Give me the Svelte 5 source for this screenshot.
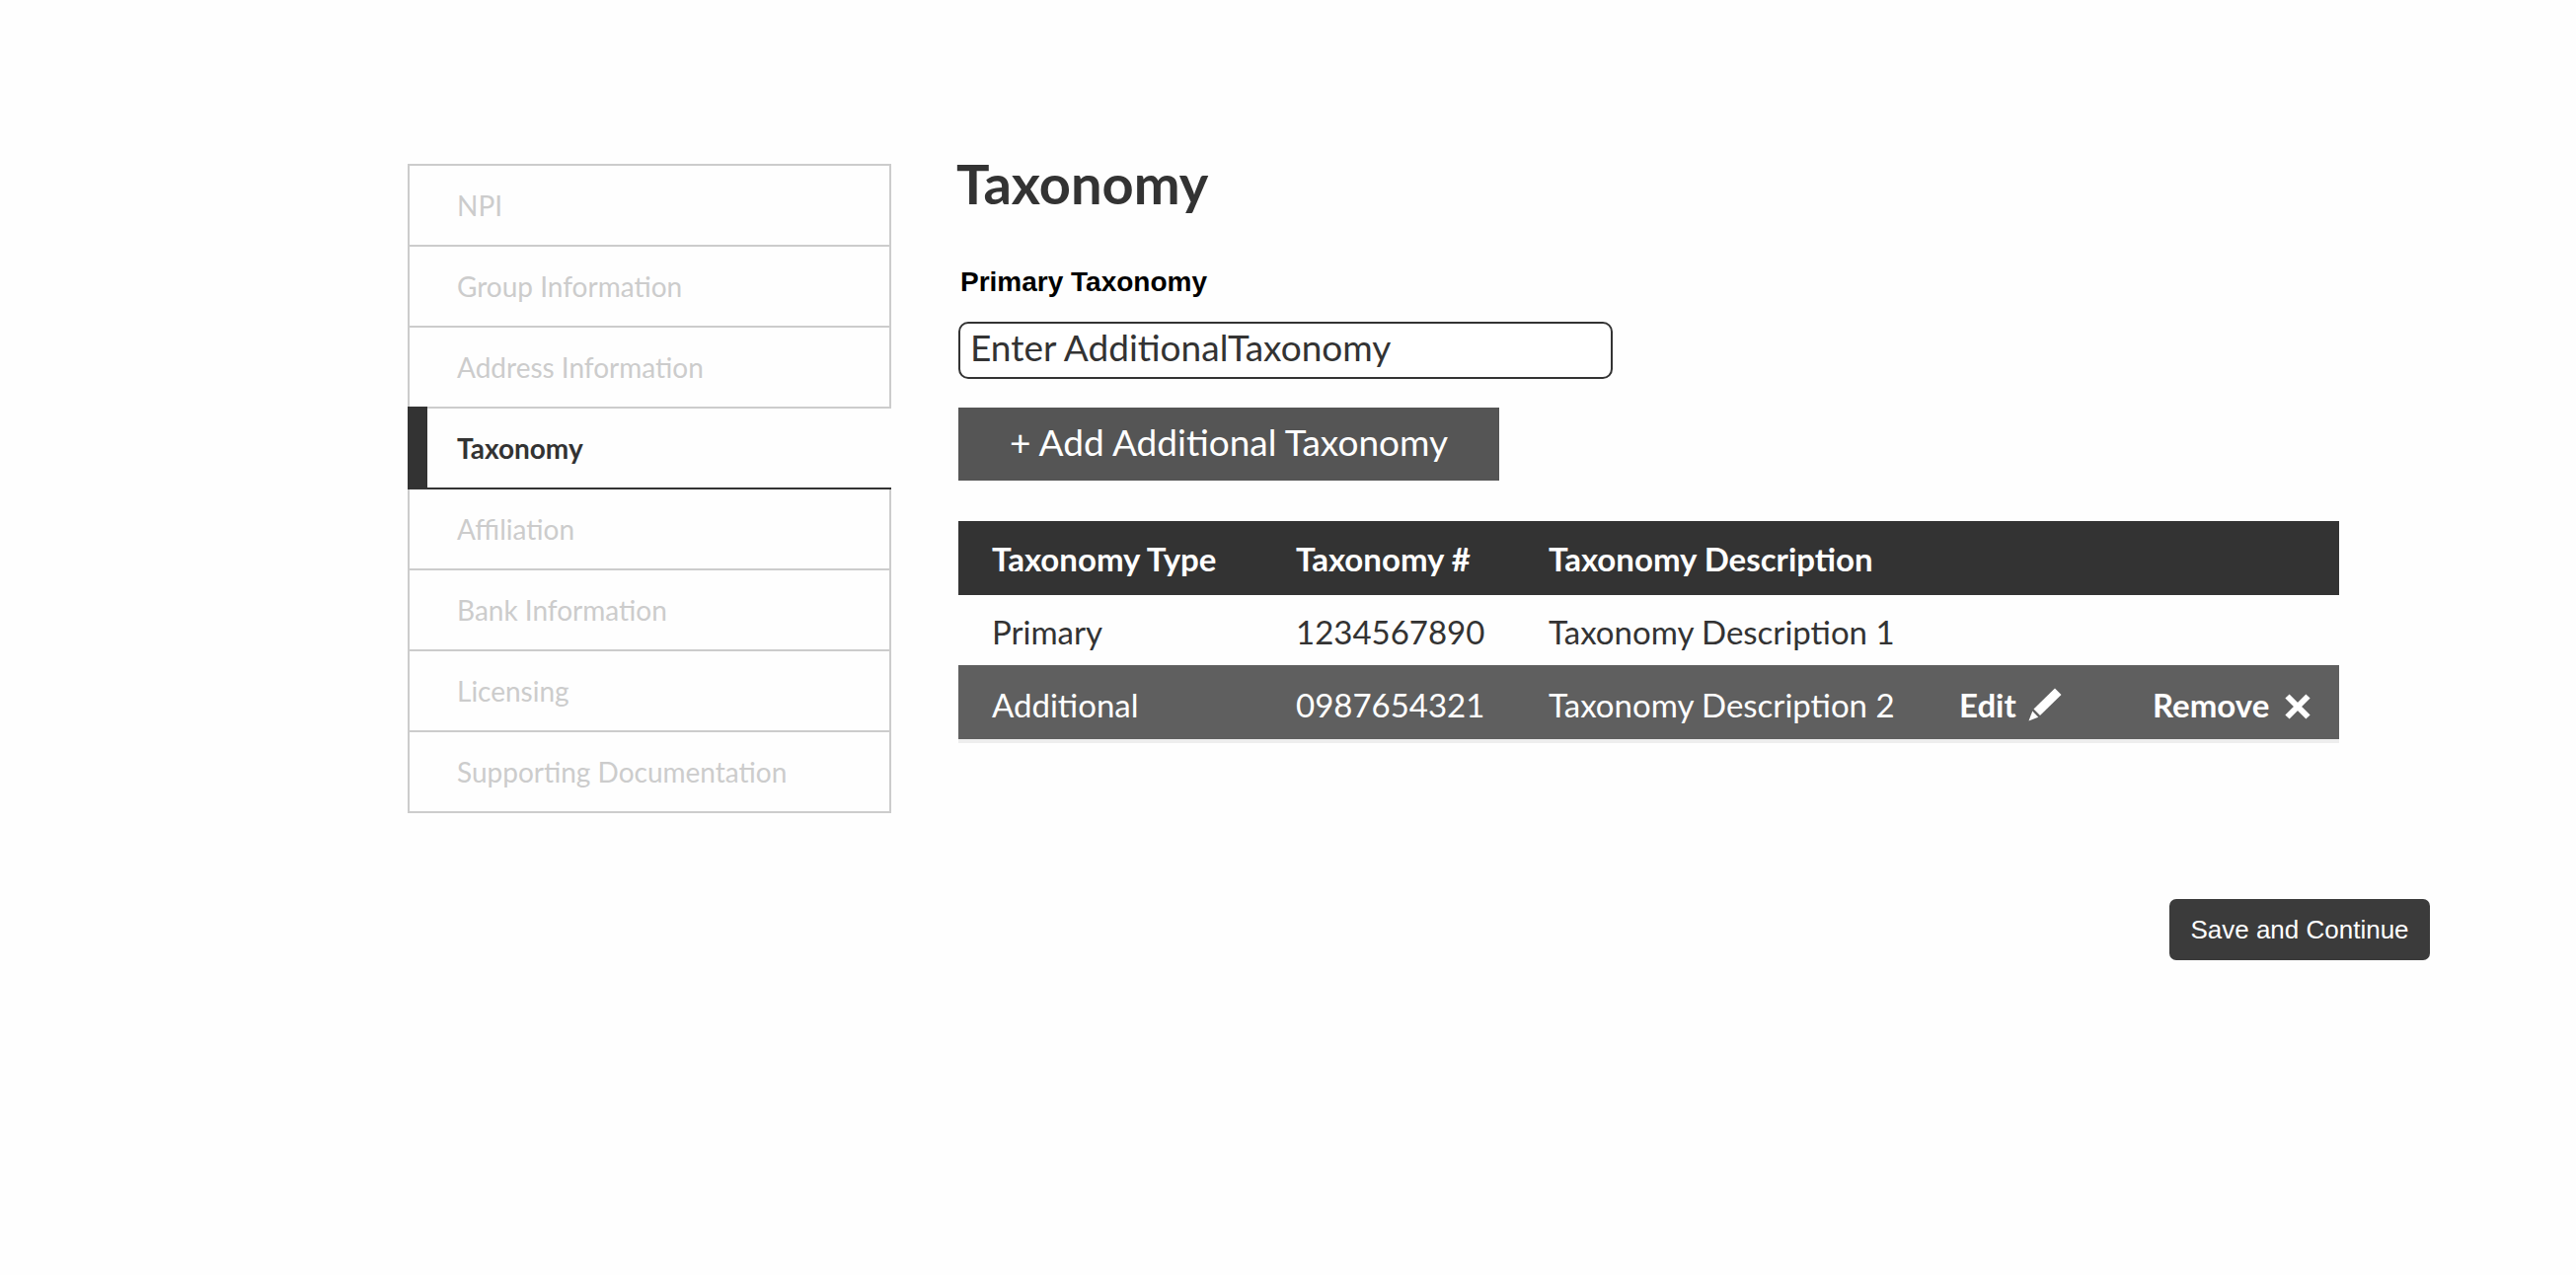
<script>
  const steps = [
    'NPI',
    'Group Information',
    'Address Information',
    'Taxonomy',
    'Affiliation',
    'Bank Information',
    'Licensing',
    'Supporting Documentation',
  ];
  const current = 'Taxonomy';

  const rows = [
    { type: 'Primary', code: '1234567890', description: 'Taxonomy Description 1', editable: false },
    { type: 'Additional', code: '0987654321', description: 'Taxonomy Description 2', editable: true },
  ];

  let entry = $state('Enter AdditionalTaxonomy');
</script>

<div class="page">
  <nav class="steps" aria-label="Enrollment steps">
    {#each steps as step}
      <a
        href="#{step.toLowerCase().replaceAll(' ', '-')}"
        class="step"
        class:active={step === current}
        aria-current={step === current ? 'step' : undefined}>{step}</a>
    {/each}
  </nav>

  <main class="content">
    <h1>Taxonomy</h1>

    <label for="taxonomy">Primary Taxonomy</label>
    <input id="taxonomy" type="text" bind:value={entry} />

    <button type="button" class="add">+ Add Additional Taxonomy</button>

    <table>
      <colgroup>
        <col class="c-type" />
        <col class="c-code" />
        <col class="c-desc" />
        <col class="c-edit" />
        <col class="c-remove" />
      </colgroup>
      <thead>
        <tr>
          <th scope="col">Taxonomy Type</th>
          <th scope="col">Taxonomy #</th>
          <th scope="col" colspan="3">Taxonomy Description</th>
        </tr>
      </thead>
      <tbody>
        {#each rows as row}
          <tr class:editable={row.editable}>
            <td>{row.type}</td>
            <td>{row.code}</td>
            {#if row.editable}
              <td>{row.description}</td>
              <td>
                <button type="button" class="action edit">
                  Edit
                  <svg class="pencil" viewBox="0 0 34 34" aria-hidden="true">
                    <path d="M27 0.5 33.5 7 12 28 5.500 21.500Z" />
                    <path d="M4.300 23.500 10.200 29.700 0.500 33.500Z" />
                  </svg>
                </button>
              </td>
              <td>
                <button type="button" class="action remove">
                  Remove
                  <svg class="cross" viewBox="0 0 26 30" aria-hidden="true">
                    <path d="M2.500 6.500 23.500 27.500M23.500 6.500 2.500 27.500" />
                  </svg>
                </button>
              </td>
            {:else}
              <td colspan="3">{row.description}</td>
            {/if}
          </tr>
        {/each}
      </tbody>
    </table>

    <button type="button" class="save">Save and Continue</button>
  </main>
</div>

<style>
  :global(body) {
    background: #fefefe;
  }

  .page {
    display: flex;
    align-items: flex-start;
    gap: 68px;
    padding: 166px 148px 166px 413px;
    box-sizing: border-box;
    font-family: Lato, sans-serif;
    color: #333;
  }

  .steps {
    flex: 0 0 490px;
    display: flex;
    flex-direction: column;
    border-top: 2px solid #ccc;
  }

  .step {
    display: flex;
    align-items: center;
    height: 82px;
    box-sizing: border-box;
    padding-left: 48px;
    border: 2px solid #ccc;
    border-top: 0;
    font-size: 28px;
    color: #ccc;
    text-decoration: none;
  }

  .step.active {
    height: 84px;
    margin-top: -2px;
    padding-left: 50px;
    border: 0;
    background:
      linear-gradient(#333, #333) left top / 20px 100% no-repeat,
      linear-gradient(#333, #333) left bottom / 100% 2px no-repeat,
      linear-gradient(#ccc, #ccc) left top / 100% 2px no-repeat;
    font-weight: 700;
    color: #333;
  }

  .content {
    flex: 1;
    display: flex;
    flex-direction: column;
    align-items: flex-start;
  }

  h1 {
    margin: -12px 0 0 -2px;
    font-size: 56px;
    line-height: 64px;
    font-weight: 700;
  }

  label {
    margin-top: 50px;
    padding-left: 2px;
    font: 700 28px/36px "Liberation Sans", sans-serif;
    color: #000;
  }

  input {
    width: 663px;
    height: 58px;
    margin-top: 22px;
    box-sizing: border-box;
    padding: 0 10px 8px;
    border: 2px solid #333;
    border-radius: 10px;
    background: #fff;
    font: 37px Lato, sans-serif;
    color: #333;
  }

  button {
    border: 0;
    cursor: pointer;
  }

  .add {
    width: 548px;
    height: 74px;
    margin-top: 29px;
    padding: 0 0 6px;
    background: #555;
    font: 37px Lato, sans-serif;
    color: #fff;
  }

  table {
    width: calc(100% - 92px);
    margin-top: 41px;
    table-layout: fixed;
    border-collapse: separate;
    border-spacing: 0;
    border-bottom: 4px solid #eee;
    font-size: 33px;
    line-height: 38px;
  }

  .c-type { width: 308px; }
  .c-code { width: 256px; }
  .c-desc { width: 416px; }
  .c-edit { width: 196px; }

  th,
  td {
    padding: 0 0 0 34px;
    text-align: left;
    white-space: nowrap;
  }

  td {
    padding-top: 2px;
  }

  thead tr {
    height: 75px;
    background: #333;
    color: #fff;
  }

  tbody tr {
    height: 71px;
  }

  tbody tr.editable {
    height: 75px;
    background: #5f5f5f;
    color: #fff;
  }

  .editable td {
    padding-top: 4px;
  }

  .action {
    display: flex;
    align-items: center;
    padding: 0;
    background: none;
    font: 700 33px/38px Lato, sans-serif;
    color: #fff;
  }

  .edit {
    gap: 12px;
  }

  .remove {
    gap: 16px;
  }

  .pencil {
    width: 34px;
    height: 34px;
    fill: #fff;
  }

  .cross {
    width: 26px;
    height: 30px;
    fill: none;
    stroke: #fff;
    stroke-width: 6;
  }

  .save {
    align-self: flex-end;
    width: 264px;
    height: 62px;
    margin-top: 158px;
    padding: 0;
    border-radius: 7px;
    background: #3b3b3b;
    font: 26px "Liberation Sans", sans-serif;
    color: #fff;
  }
</style>
